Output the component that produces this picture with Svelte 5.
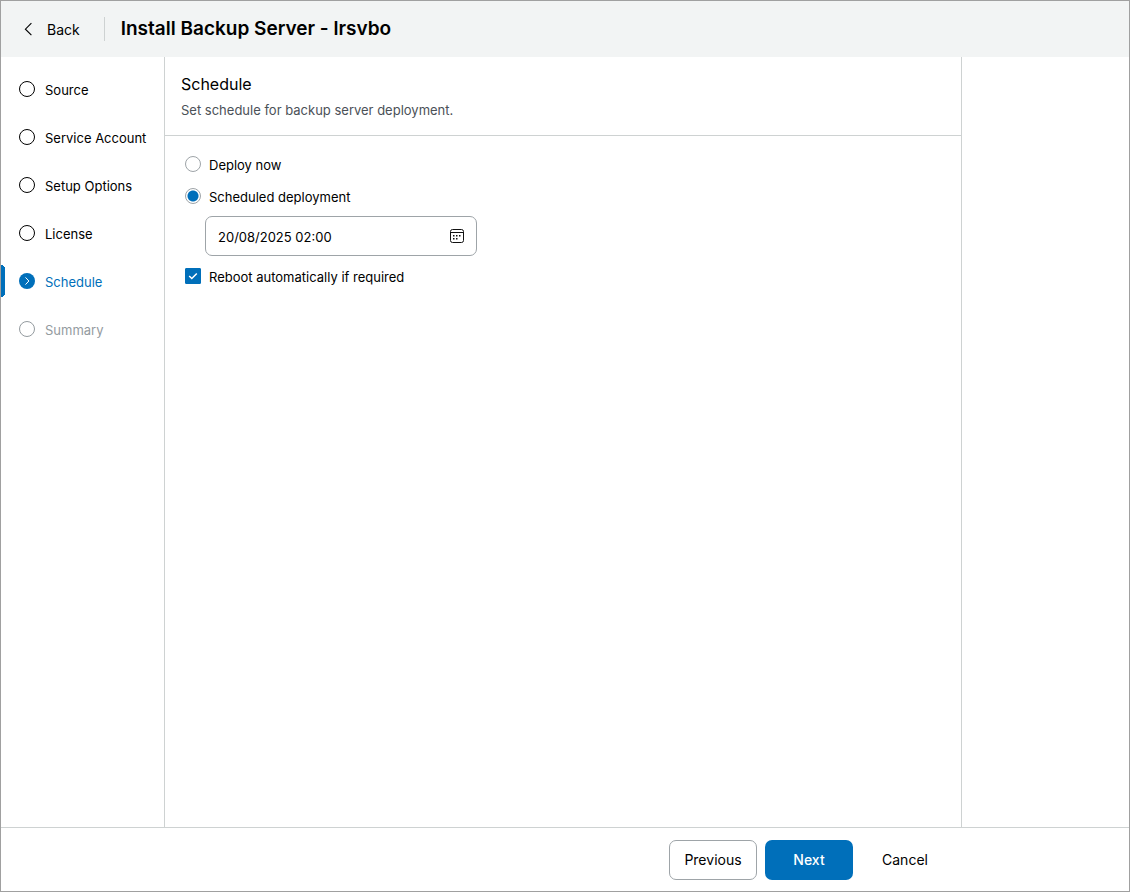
<script>
  const steps = [
    { name: 'Source', state: 'open' },
    { name: 'Service Account', state: 'open' },
    { name: 'Setup Options', state: 'open' },
    { name: 'License', state: 'open' },
    { name: 'Schedule', state: 'current' },
    { name: 'Summary', state: 'disabled' },
  ];
  let mode = $state('scheduled');
  let when = $state('20/08/2025 02:00');
  let reboot = $state(true);
</script>

<div class="window">
  <header>
    <button class="back" type="button">
      <svg width="16" height="16" viewBox="0 0 16 16" fill="none" stroke="currentColor" stroke-width="1.1" aria-hidden="true">
        <path d="M10.4 2.2 4.4 8.2l6 6" />
      </svg>
      <span>Back</span>
    </button>
    <h1>Install Backup Server - lrsvbo</h1>
  </header>

  <div class="body">
    <nav>
      {#each steps as step}
        <button
          type="button"
          class="step {step.state}"
          disabled={step.state === 'disabled'}
          aria-current={step.state === 'current' ? 'step' : undefined}
        >
          <svg width="16" height="16" viewBox="0 0 16 16" fill="none" stroke="currentColor" aria-hidden="true">
            {#if step.state === 'current'}
              <circle cx="8" cy="8" r="8" fill="currentColor" stroke="none" />
              <path d="m6.5 4.4 3.4 3.6-3.4 3.6" stroke="#fff" />
            {:else}
              <circle cx="8" cy="8" r="7.5" />
            {/if}
          </svg>
          <span>{step.name}</span>
        </button>
      {/each}
    </nav>

    <main>
      <div class="intro">
        <h2>Schedule</h2>
        <p>Set schedule for backup server deployment.</p>
      </div>
      <form>
        <label class="choice">
          <input type="radio" name="mode" value="now" bind:group={mode} />
          <span>Deploy now</span>
        </label>
        <label class="choice">
          <input type="radio" name="mode" value="scheduled" bind:group={mode} />
          <span>Scheduled deployment</span>
        </label>
        <div class="date">
          <input type="text" aria-label="Deployment date and time" bind:value={when} />
          <button type="button" aria-label="Open calendar">
            <svg width="16" height="16" viewBox="0 0 16 16" aria-hidden="true">
              <rect x="1.5" y="1.5" width="13" height="13" rx="2" fill="none" stroke="#111" />
              <path d="M1.5 4.5h13" stroke="#111" />
              <path d="M7 7h1.5v1.5H7zM10 7h1.5v1.5H10zM4 7h1.5v1.5H4zM4 10h1.5v1.5H4zM7 10h1.5v1.5H7z" fill="#111" />
            </svg>
          </button>
        </div>
        <label class="choice">
          <input type="checkbox" bind:checked={reboot} />
          <span>Reboot automatically if required</span>
        </label>
      </form>
    </main>
  </div>

  <footer>
    <div class="actions">
      <button type="button" class="outline">Previous</button>
      <button type="button" class="primary">Next</button>
      <button type="button">Cancel</button>
    </div>
  </footer>
</div>

<style>
  :global(body) {
    margin: 0;
  }
  .window {
    box-sizing: border-box;
    display: flex;
    flex-direction: column;
    min-height: 100vh;
    border: 1px solid #a0a0a0;
    background: #fff;
    color: #000;
    font: 14px/20px Inter, 'Liberation Sans', sans-serif;
  }
  button,
  input {
    box-sizing: border-box;
    margin: 0;
    padding: 0;
    border: 0;
    background: none;
    color: inherit;
    font: inherit;
  }
  svg {
    display: block;
    flex: none;
  }
  header {
    display: flex;
    align-items: center;
    height: 56px;
    background: #f2f4f4;
  }
  .back {
    display: flex;
    align-items: center;
    gap: 10px;
    height: 24px;
    padding: 0 24px 0 20px;
    border-right: 1px solid #ced2d2;
  }
  .back span,
  .step span {
    padding-top: 2px;
  }
  h1,
  h2,
  p {
    margin: 0;
  }
  h1 {
    padding-left: 16px;
    font-size: 19px;
    font-weight: 600;
    line-height: 24px;
  }
  .body {
    display: flex;
    flex: 1;
    font-size: 13px;
  }
  nav {
    box-sizing: border-box;
    flex: none;
    width: 164px;
    padding-top: 16px;
    border-right: 1px solid #ced2d2;
  }
  .step {
    display: flex;
    align-items: center;
    gap: 10px;
    width: 100%;
    height: 32px;
    margin-bottom: 16px;
    padding-left: 14px;
    border-left: 4px solid transparent;
    white-space: nowrap;
  }
  .current {
    color: #006fba;
    background: radial-gradient(circle at 0 4px, #006fba 4px, transparent 4px) border-box no-repeat 0 0 / 4px 4px,
      radial-gradient(circle at 0 0, #006fba 4px, transparent 4px) border-box no-repeat 0 100% / 4px 4px,
      linear-gradient(#006fba, #006fba) border-box no-repeat 0 50% / 4px 24px;
  }
  .disabled {
    color: #949b9f;
  }
  main {
    flex: 1;
    max-width: 796px;
    border-right: 1px solid #ced2d2;
  }
  .intro {
    padding: 15px 16px;
    border-bottom: 1px solid #ced2d2;
  }
  h2 {
    font-size: 16px;
    font-weight: 400;
    line-height: 24px;
  }
  p {
    padding-top: 4px;
    color: #4b5157;
  }
  form {
    padding: 16px 20px;
  }
  .choice {
    display: flex;
    align-items: center;
    gap: 8px;
    width: fit-content;
    height: 24px;
    margin-bottom: 8px;
  }
  .choice span {
    padding-top: 2px;
  }
  .choice input {
    appearance: none;
    width: 16px;
    height: 16px;
    border: 1px solid #9ea4a8;
  }
  input[type='radio'] {
    border-radius: 50%;
  }
  input[type='radio']:checked {
    background: radial-gradient(circle, #006fba 5px, #fff 6px);
  }
  input[type='checkbox'] {
    border-radius: 1px;
  }
  input[type='checkbox']:checked {
    border-color: #006fba;
    background: #006fba
      url("data:image/svg+xml,%3Csvg xmlns='http://www.w3.org/2000/svg' viewBox='0 0 16 16'%3E%3Cpath d='m4.2 8 2.6 2.5 5-5' fill='none' stroke='white' stroke-width='1.5'/%3E%3C/svg%3E")
      border-box center / 16px 16px no-repeat;
  }
  .date {
    box-sizing: border-box;
    display: flex;
    align-items: center;
    max-width: 272px;
    height: 40px;
    margin: 0 0 8px 20px;
    padding: 0 11px 0 12px;
    border: 1px solid #9ea4a8;
    border-radius: 7px;
  }
  .date input {
    flex: 1;
    min-width: 0;
    padding-top: 2px;
    outline: 0;
  }
  footer {
    display: flex;
    border-top: 1px solid #ced2d2;
  }
  .actions {
    box-sizing: border-box;
    display: flex;
    flex: 1;
    justify-content: flex-end;
    gap: 8px;
    max-width: 960px;
    padding: 12px 12px 11px;
  }
  .actions button {
    width: 88px;
    height: 40px;
    border-radius: 7px;
  }
  .actions .outline {
    border: 1px solid #9ea4a8;
  }
  .actions .primary {
    background: #006fba;
    color: #fff;
    font-weight: 500;
  }
</style>
